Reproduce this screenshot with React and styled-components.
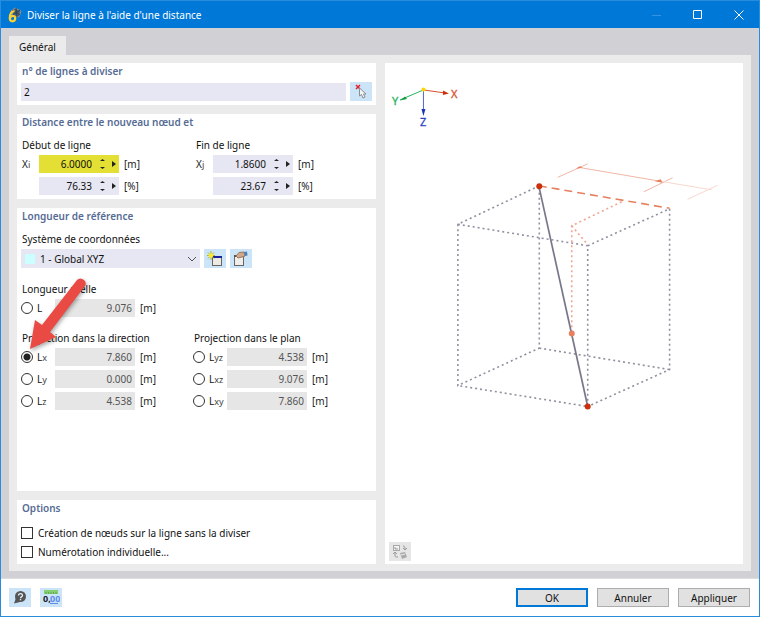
import React, { useState } from "react";
import styled, { createGlobalStyle } from "styled-components";

const Global = createGlobalStyle`
  *, *::before, *::after { box-sizing: border-box; }
  body { margin: 0; background: #fff; }
  button, input, select { font: inherit; color: inherit; margin: 0; }
`;

const Window = styled.div`
  display: flex;
  flex-direction: column;
  min-height: 100vh;
  border: 1px solid #2a8ddb;
  background: #fff;
  color: #111;
  font: 10px/16px "Noto Sans", "Open Sans", sans-serif;
`;

const TitleBar = styled.header`
  display: flex;
  align-items: center;
  height: 27px;
  padding: 0 0 0 6px;
  background: #0078d7;
  color: #fff;
`;

const Title = styled.h1`
  flex: 1;
  margin: 0;
  padding-left: 5px;
  font-size: 10px;
  font-weight: 400;
`;

const CaptionButton = styled.button`
  display: grid;
  place-items: center;
  width: 41px;
  height: 26px;
  padding: 0;
  border: 0;
  background: none;
  color: ${(p) => (p.disabled ? "#3593df" : "#fff")};
`;

const Body = styled.main`
  display: flex;
  flex-direction: column;
  flex: 1;
  padding: 8px 8px 7px;
  background: #d1d0d5;
  border-bottom: 1px solid #dedede;
`;

const Tab = styled.button`
  align-self: flex-start;
  height: 19px;
  padding: 2px 10px 0;
  border: 0;
  background: #ebebeb;
`;

const Page = styled.div`
  display: grid;
  grid-template-columns: 1fr 1fr;
  gap: 9px;
  flex: 1;
  padding: 8px 8px 7px;
  background: #ebebeb;
`;

const Column = styled.div`
  display: flex;
  flex-direction: column;
  gap: 9px;
  min-width: 0;
`;

const Panel = styled.section`
  position: relative;
  flex: ${(p) => (p.$grow ? "1" : "none")};
  padding: 0 4px ${(p) => p.$bottom || 4}px;
  background: #fff;
`;

const PanelTitle = styled.h2`
  margin: 0 0 ${(p) => p.$space || 0}px;
  padding-left: 1px;
  color: #566c94;
  font-size: 10px;
  font-weight: 600;
  line-height: 16px;
`;

const SubTitle = styled.div`
  margin: ${(p) => p.$top || 0}px 0 2px;
  padding-left: 1px;
  line-height: 16px;
  white-space: nowrap;
`;

const Line = styled.div`
  display: flex;
  align-items: center;
  gap: 4px;
`;

const TextBox = styled.input`
  flex: 1;
  min-width: 0;
  height: 18px;
  padding: 0 3px;
  border: 0;
  background: #e7e7f3;
`;

const IconButton = styled.button`
  display: grid;
  place-items: center;
  width: 22px;
  height: 19px;
  padding: 0;
  border: 0;
  background: ${(p) => (p.disabled ? "#e6e6e6" : "#cce4f7")};
`;

const Columns = styled.div`
  display: grid;
  grid-template-columns: ${(p) => p.$first || 174}px 1fr;
`;

const Stack = styled.div`
  display: flex;
  flex-direction: column;
  gap: 4px;
`;

const Symbol = styled.label`
  width: 14px;
  padding-left: 1px;
  white-space: nowrap;
  color: #222;

  small { font-size: 9px; color: #444; }
`;

const Spin = styled.span`
  display: flex;
  align-items: center;
  gap: 6px;
  width: 80px;
  height: 18px;
  padding-right: 3px;
  background: ${(p) => (p.$active ? "#e3df35" : "#e7e7f3")};

  input {
    flex: 1;
    min-width: 0;
    padding: 0 1px 0 0;
    border: 0;
    background: none;
    text-align: right;
  }
`;

const Unit = styled.span`
  padding-left: 1px;
  color: #222;
`;

const Combo = styled.span`
  display: flex;
  align-items: center;
  width: 179px;
  height: 19px;
  padding: 0 4px;
  background: #e7e7f3;

  select {
    flex: 1;
    min-width: 0;
    padding: 0 0 0 5px;
    border: 0;
    background: none;
    appearance: none;
  }
`;

const Swatch = styled.i`
  width: 10px;
  height: 10px;
  background: #ccffff;
`;

const Radio = styled.input`
  appearance: none;
  width: 12px;
  height: 12px;
  border: 1px solid #333;
  border-radius: 50%;
  background: #fff;

  &:checked { background: radial-gradient(circle, #222 0 3px, #fff 4px); }
`;

const RadioLabel = styled.label`
  width: 14px;
  white-space: nowrap;

  small { font-size: 9px; color: #444; }
`;

const Result = styled.output`
  width: 80px;
  height: 18px;
  padding-right: 3px;
  background: #e6e6e6;
  color: #555;
  text-align: right;
  line-height: 18px;
`;

const Check = styled.label`
  display: flex;
  align-items: center;
  gap: 5px;
  height: 19px;

  input {
    appearance: none;
    width: 12px;
    height: 12px;
    border: 1px solid #333;
    background: #fff;
  }

  input:checked { background: #333; }
`;

const Preview = styled(Panel)`
  display: flex;
  flex-direction: column;
  justify-content: space-between;
  padding: 0 0 3px;
`;

const Scene = styled.svg`
  display: block;
  width: 100%;
  font: 11px "Noto Sans", sans-serif;
`;

const PreviewTools = styled.div`
  padding-left: 4px;
`;

const Pointer = styled.svg`
  position: absolute;
  left: 8px;
  top: 66px;
  width: 70px;
  height: 84px;
  pointer-events: none;
  filter: drop-shadow(1px 2px 2px rgba(0, 0, 0, 0.35));
`;

const Footer = styled.footer`
  display: flex;
  align-items: center;
  gap: 9px;
  height: 37px;
  padding: 0 9px 0 8px;
`;

const Spacer = styled.span`
  flex: 1;
`;

const PushButton = styled.button`
  width: 72px;
  height: 19px;
  padding: 0;
  border: ${(p) => (p.$primary ? "2px solid #0078d7" : "1px solid #adadad")};
  background: #e1e1e1;
  line-height: 14px;
`;

function AppIcon() {
  return (
    <svg width="15" height="16" viewBox="0 0 15 16" aria-hidden="true">
      <path d="M4 4L8 1L14 4L12 10L7 9z" fill="#4f6272" stroke="#8d949a" />
      <path d="M5 3l8 5M9 1l1 9M13 3L6 8" stroke="#2c4458" fill="none" />
      <path d="M7.500 4C4.500 4.500 2.800 7.500 2.800 11C2.800 13 3.800 14.300 5.500 14.300C7.300 14.300 8.200 13 8.200 11.300C8.200 8.500 4.500 8 3 11" fill="none" stroke="#ffd32e" strokeWidth="2.200" />
    </svg>
  );
}

function PickIcon() {
  return (
    <svg width="14" height="16" viewBox="0 0 14 16" aria-hidden="true">
      <path d="M2 1L6 5M6 1L2 5" stroke="#e02331" strokeWidth="1.500" />
      <path d="M5.500 4V12L7.500 10.500L9 14L11 13L9.500 10H12z" fill="#f4f4f4" stroke="#8b8f96" />
    </svg>
  );
}

function NewIcon() {
  return (
    <svg width="18" height="16" viewBox="0 0 18 16" aria-hidden="true">
      <rect x="6.500" y="5.500" width="9" height="9" fill="#eee9e2" stroke="#666" />
      <path d="M6 6h10" stroke="#17259a" strokeWidth="2" />
      <path d="M5 0v9M1 4.500h8M2 1.500l6 6M8 1.500l-6 6" stroke="#a7b52c" />
      <circle cx="5" cy="4.500" r="2.300" fill="#ffe924" />
    </svg>
  );
}

function EditIcon() {
  return (
    <svg width="18" height="16" viewBox="0 0 18 16" aria-hidden="true">
      <rect x="2.500" y="4.500" width="9" height="10" fill="#f0eeeb" stroke="#666" />
      <path d="M2 5h10" stroke="#555" strokeWidth="2" />
      <path d="M4 5L7 1.500L12 1L13 5L10 6L6 7z" fill="#d2a88b" stroke="#9a765e" />
      <path d="M12 1l3-.5.5 4L13 5z" fill="#4a82bc" />
    </svg>
  );
}

function HelpIcon() {
  return (
    <svg width="16" height="16" viewBox="0 0 16 16" aria-hidden="true">
      <circle cx="8.500" cy="6.500" r="5.500" fill="#555" />
      <path d="M4 8L2 13.500L8 12z" fill="#555" />
      <path d="M6.500 5.500C6.500 3 10.500 3 10.500 5.500C10.500 7 8.500 6.800 8.500 8.200M8.500 9v1.300" stroke="#e6eff7" strokeWidth="1.300" fill="none" />
    </svg>
  );
}

const DigitsText = styled.text`
  font: 700 9px "Noto Sans", sans-serif;
`;

function DigitsIcon() {
  return (
    <svg width="18" height="17" viewBox="0 0 18 17" aria-hidden="true">
      <rect x="2" y="1" width="14" height="4" fill="#83cf72" />
      <path d="M4 3v2M6.500 3v2M9 3v2M11.500 3v2M14 3v2" stroke="#5cab50" />
      <DigitsText x="1" y="13" fill="#222">0,</DigitsText>
      <DigitsText x="8" y="13" fill="#5d8df0">00</DigitsText>
      <path d="M8 14.500h8" stroke="#5d8df0" />
    </svg>
  );
}

function SwapIcon() {
  return (
    <svg width="16" height="16" viewBox="0 0 16 16" aria-hidden="true">
      <rect x="1.500" y="1.500" width="6" height="5" fill="#f2f2f2" stroke="#aaa" />
      <path d="M3 3v2h3M11 2c2 0 2 1 2 4M11 4l2 2 2-2M3 9v3c0 1 1 1 3 1M1 10l2-2 2 2" stroke="#999" fill="none" />
      <path d="M8 9l5-1 2 5-5 2z" fill="#aaa" />
      <path d="M9 11l4-1" stroke="#eee" />
    </svg>
  );
}

function SpinArrows() {
  return (
    <svg width="17" height="12" viewBox="0 0 17 12" aria-hidden="true">
      <path d="M1 3L3.500 1L6 3zM1 9L3.500 11L6 9zM13 3L17 6L13 9z" fill="#222" />
    </svg>
  );
}

function SpinRow({ id, symbol, value, unit, active }) {
  return (
    <Line>
      <Symbol htmlFor={id}>{symbol}</Symbol>
      <Spin $active={active}>
        <input id={id} defaultValue={value} aria-label={symbol ? undefined : "Distance relative"} />
        <SpinArrows />
      </Spin>
      <Unit>{unit}</Unit>
    </Line>
  );
}

function LengthRow({ name, value, selected, onSelect }) {
  const id = "length-" + (name || "real");
  return (
    <Line>
      <Radio type="radio" name="length" id={id} checked={selected === name} onChange={() => onSelect(name)} />
      <RadioLabel htmlFor={id}>L<small>{name}</small></RadioLabel>
      <Result>{value}</Result>
      <Unit>[m]</Unit>
    </Line>
  );
}

const red = "#cc2f0a";
const coral = "#e6805f";

function PreviewScene() {
  return (
    <Scene viewBox="385 63 359 400" role="img" aria-label="Projection de la ligne">
      <path d="M423.500 90L400 100" stroke="#25b35e" />
      <path d="M423.500 90L445 93" stroke="#d9502f" />
      <path d="M423.500 90V110" stroke="#5165cf" />
      <path d="M400 100.500L405 96.500L407 99z" fill="#109b42" />
      <path d="M449 93.500L443 90.500L443 95z" fill={red} />
      <path d="M423.500 116L421.500 109H425.500z" fill="#1b34b8" />
      <circle cx="423.500" cy="89.500" r="2" fill="#ffd500" />
      <text x="392" y="105" fill="#25b35e" stroke="#25b35e" strokeWidth="0.300">Y</text>
      <text x="451" y="98" fill="#d9502f" stroke="#d9502f" strokeWidth="0.300">X</text>
      <text x="420" y="126" fill="#2e46c4" stroke="#2e46c4" strokeWidth="0.300">Z</text>

      <g fill="none" stroke="#9090a0" strokeWidth="1.600" strokeDasharray="2 3">
        <path d="M539.500 186L458 224.500V386L539.500 348.500V186" />
        <path d="M458 224.500L588 246V407L458 386" />
        <path d="M588 246L670 209V370L588 407" />
        <path d="M539.500 348.500L670 370" />
      </g>
      <g fill="none" stroke="#f0a590" strokeWidth="1.600" strokeDasharray="2 3">
        <path d="M622 202L572 226V334" />
        <path d="M572 226L588 245" />
      </g>
      <path d="M539 186L670 208.500" stroke={coral} strokeWidth="1.600" strokeDasharray="8 5" />
      <g fill="none" stroke="#f1b6a6">
        <path d="M558 177.500L588 164M579 167.500L661 181.500M644 192L673 178" />
        <path d="M661 181.500L712 190M688 199.500L718 185.500" stroke="#f8d8cf" />
      </g>
      <path d="M576 169L580 166.500L583 168zM655 181.500L661 179.500L663 183z" fill={coral} />
      <path d="M539 186L588 407" stroke="#777789" strokeWidth="1.700" />
      <circle cx="539.500" cy="186.500" r="3" fill={red} />
      <circle cx="588" cy="407" r="3" fill={red} />
      <circle cx="572" cy="334" r="3" fill={coral} />
    </Scene>
  );
}

export default function App() {
  const [length, setLength] = useState("x");
  const row = { selected: length, onSelect: setLength };

  return (
    <>
      <Global />
      <Window>
        <TitleBar>
          <AppIcon />
          <Title>Diviser la ligne à l'aide d'une distance</Title>
          <CaptionButton disabled aria-label="Réduire">
            <svg width="10" height="10"><path d="M0 5.500h9" stroke="currentColor" /></svg>
          </CaptionButton>
          <CaptionButton aria-label="Agrandir">
            <svg width="10" height="10"><path d="M.5 .5h8v8h-8z" fill="none" stroke="currentColor" /></svg>
          </CaptionButton>
          <CaptionButton aria-label="Fermer">
            <svg width="10" height="10"><path d="M.5 .5l9 9M9.500 .5l-9 9" stroke="currentColor" /></svg>
          </CaptionButton>
        </TitleBar>

        <Body>
          <Tab>Général</Tab>
          <Page>
            <Column>
              <Panel>
                <PanelTitle $space={3}>n° de lignes à diviser</PanelTitle>
                <Line>
                  <TextBox defaultValue="2" aria-label="n° de lignes à diviser" />
                  <IconButton aria-label="Sélectionner"><PickIcon /></IconButton>
                </Line>
              </Panel>

              <Panel>
                <PanelTitle $space={7}>Distance entre le nouveau nœud et</PanelTitle>
                <Columns>
                  <div>
                    <SubTitle>Début de ligne</SubTitle>
                    <Stack>
                      <SpinRow id="xi" symbol={<>X<small>i</small></>} value="6.0000" unit="[m]" active />
                      <SpinRow id="xi-rel" value="76.33" unit="[%]" />
                    </Stack>
                  </div>
                  <div>
                    <SubTitle>Fin de ligne</SubTitle>
                    <Stack>
                      <SpinRow id="xj" symbol={<>X<small>j</small></>} value="1.8600" unit="[m]" />
                      <SpinRow id="xj-rel" value="23.67" unit="[%]" />
                    </Stack>
                  </div>
                </Columns>
              </Panel>

              <Panel $grow>
                <PanelTitle $space={7}>Longueur de référence</PanelTitle>
                <SubTitle>Système de coordonnées</SubTitle>
                <Line>
                  <Combo>
                    <Swatch />
                    <select aria-label="Système de coordonnées"><option>1 - Global XYZ</option></select>
                    <svg width="8" height="6" aria-hidden="true"><path d="M0 1l4 4 4-4" fill="none" stroke="#555" /></svg>
                  </Combo>
                  <IconButton aria-label="Nouveau"><NewIcon /></IconButton>
                  <IconButton aria-label="Modifier"><EditIcon /></IconButton>
                </Line>
                <SubTitle $top={13}>Longueur réelle</SubTitle>
                <LengthRow name="" value="9.076" {...row} />
                <Columns $first={172}>
                  <div>
                    <SubTitle $top={13}>Projection dans la direction</SubTitle>
                    <Stack>
                      <LengthRow name="x" value="7.860" {...row} />
                      <LengthRow name="y" value="0.000" {...row} />
                      <LengthRow name="z" value="4.538" {...row} />
                    </Stack>
                  </div>
                  <div>
                    <SubTitle $top={13}>Projection dans le plan</SubTitle>
                    <Stack>
                      <LengthRow name="yz" value="4.538" {...row} />
                      <LengthRow name="xz" value="9.076" {...row} />
                      <LengthRow name="xy" value="7.860" {...row} />
                    </Stack>
                  </div>
                </Columns>
                <Pointer viewBox="25 275 70 84" aria-hidden="true">
                  <path d="M30 350L35 321L42 326L77 281Q80 278 84 281Q87 284 85 287L50 333L56 338z" fill="#e94a43" />
                </Pointer>
              </Panel>

              <Panel $bottom={3}>
                <PanelTitle $space={7}>Options</PanelTitle>
                <Check><input type="checkbox" />Création de nœuds sur la ligne sans la diviser</Check>
                <Check><input type="checkbox" />Numérotation individuelle...</Check>
              </Panel>
            </Column>

            <Preview>
              <PreviewScene />
              <PreviewTools>
                <IconButton disabled aria-label="Changer d'image"><SwapIcon /></IconButton>
              </PreviewTools>
            </Preview>
          </Page>
        </Body>

        <Footer>
          <IconButton aria-label="Aide"><HelpIcon /></IconButton>
          <IconButton aria-label="Unités et décimales"><DigitsIcon /></IconButton>
          <Spacer />
          <PushButton $primary>OK</PushButton>
          <PushButton>Annuler</PushButton>
          <PushButton>Appliquer</PushButton>
        </Footer>
      </Window>
    </>
  );
}
